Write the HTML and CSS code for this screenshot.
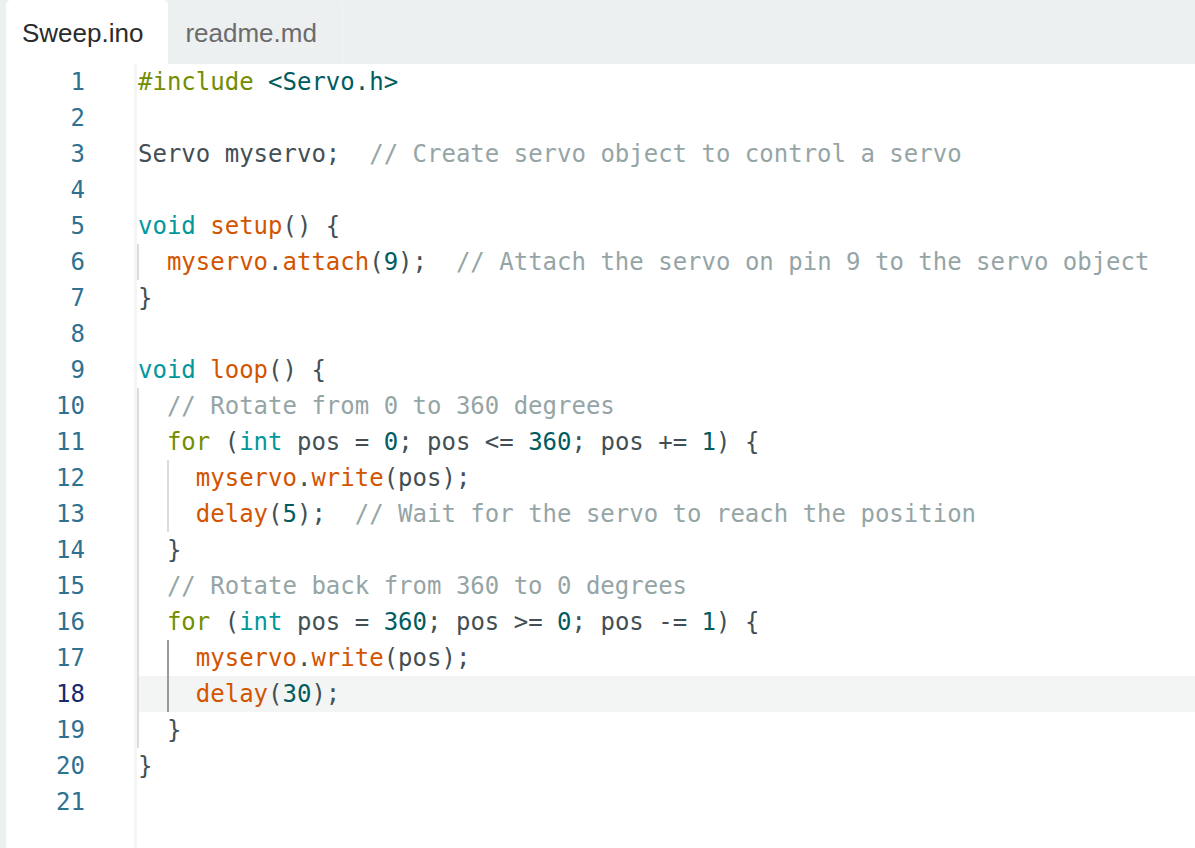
FILE: index.html
```html
<!DOCTYPE html>
<html lang="en">
<head>
<meta charset="UTF-8">
<title>Sweep.ino</title>
<link rel="stylesheet" href="styles.css">
</head>
<body>
<div class="page">
  <div class="tabs">
    <div class="tab active">Sweep.ino</div>
    <div class="tab">readme.md</div>
    <div class="tab-rest"></div>
  </div>
  <div class="editor">
    <div class="row"><span class="num">1</span><span class="code"><span class="pp">#include</span> <span class="str">&lt;Servo.h&gt;</span></span></div>
    <div class="row"><span class="num">2</span><span class="code"></span></div>
    <div class="row"><span class="num">3</span><span class="code">Servo myservo;  <span class="cm">// Create servo object to control a servo</span></span></div>
    <div class="row"><span class="num">4</span><span class="code"></span></div>
    <div class="row"><span class="num">5</span><span class="code"><span class="ty">void</span> <span class="fn">setup</span>() {</span></div>
    <div class="row"><span class="num">6</span><span class="code"><span class="ind"></span><span class="fn">myservo</span>.<span class="fn">attach</span>(<span class="nu">9</span>);  <span class="cm">// Attach the servo on pin 9 to the servo object</span></span></div>
    <div class="row"><span class="num">7</span><span class="code">}</span></div>
    <div class="row"><span class="num">8</span><span class="code"></span></div>
    <div class="row"><span class="num">9</span><span class="code"><span class="ty">void</span> <span class="fn">loop</span>() {</span></div>
    <div class="row"><span class="num">10</span><span class="code"><span class="ind"></span><span class="cm">// Rotate from 0 to 360 degrees</span></span></div>
    <div class="row"><span class="num">11</span><span class="code"><span class="ind"></span><span class="kw">for</span> (<span class="ty">int</span> pos = <span class="nu">0</span>; pos &lt;= <span class="nu">360</span>; pos += <span class="nu">1</span>) {</span></div>
    <div class="row"><span class="num">12</span><span class="code"><span class="ind"></span><span class="ind"></span><span class="fn">myservo</span>.<span class="fn">write</span>(pos);</span></div>
    <div class="row"><span class="num">13</span><span class="code"><span class="ind"></span><span class="ind"></span><span class="fn">delay</span>(<span class="nu">5</span>);  <span class="cm">// Wait for the servo to reach the position</span></span></div>
    <div class="row"><span class="num">14</span><span class="code"><span class="ind"></span>}</span></div>
    <div class="row"><span class="num">15</span><span class="code"><span class="ind"></span><span class="cm">// Rotate back from 360 to 0 degrees</span></span></div>
    <div class="row"><span class="num">16</span><span class="code"><span class="ind"></span><span class="kw">for</span> (<span class="ty">int</span> pos = <span class="nu">360</span>; pos &gt;= <span class="nu">0</span>; pos -= <span class="nu">1</span>) {</span></div>
    <div class="row"><span class="num">17</span><span class="code"><span class="ind"></span><span class="ind dark"></span><span class="fn">myservo</span>.<span class="fn">write</span>(pos);</span></div>
    <div class="row current"><span class="num">18</span><span class="code"><span class="ind"></span><span class="ind dark"></span><span class="fn">delay</span>(<span class="nu">30</span>);</span></div>
    <div class="row"><span class="num">19</span><span class="code"><span class="ind"></span>}</span></div>
    <div class="row"><span class="num">20</span><span class="code">}</span></div>
    <div class="row"><span class="num">21</span><span class="code"></span></div>
    <div class="row filler"><span class="num"></span><span class="code"></span></div>
  </div>
</div>
</body>
</html>
```

FILE: styles.css
```css
html, body {
    margin: 0;
    height: 100%;
    background: #fff;
}
.page {
    border-left: 6px solid #ecf0f1;
    min-height: 100%;
    box-sizing: border-box;
    display: flex;
    flex-direction: column;
}
.tabs {
    display: flex;
    height: 64px;
    background: #ecf0f1;
    font-family: "Liberation Sans", Arial, sans-serif;
    font-size: 26px;
}
.tab {
    display: flex;
    align-items: center;
    padding: 2px 25px 0 17px;
    color: #6b6b6b;
    border-radius: 5px 5px 0 0;
    border-right: 1px solid #f4f5f7;
}
.tab.active {
    background: #fff;
    color: #2b2b2b;
    padding-left: 16px;
    border-right: none;
}
.tab-rest { flex: 1; }

.editor {
    flex: 1;
    display: flex;
    flex-direction: column;
    font-family: "DejaVu Sans Mono", monospace;
    font-size: 24px;
}
.row {
    display: flex;
    height: 36px;
    line-height: 36px;
}
.row.filler { flex: 1; }
.num {
    width: 79px;
    padding-right: 49px;
    text-align: right;
    color: #2f7190;
    border-right: 3px solid #f5f5f5;
    flex-shrink: 0;
}
.current .num { color: #172a6e; }
.code {
    flex: 1;
    white-space: pre;
    color: #434f54;
    padding-left: 1px;
}
.current .code { background: #f3f4f4; }
.ind {
    display: inline-block;
    width: 2ch;
    height: 36px;
    vertical-align: top;
    background: linear-gradient(to right, #dcdcdc 2px, transparent 2px);
    margin-left: -1px;
    padding-left: 1px;
}
.ind + .ind { margin-left: 0; padding-left: 0; }
.ind.dark { background: linear-gradient(to right, #9a9a9a 2px, transparent 2px); }

.pp, .kw { color: #728e00; }
.str, .nu { color: #005c5f; }
.ty { color: #00979d; }
.fn { color: #d35400; }
.cm { color: #95a5a6; }
```
